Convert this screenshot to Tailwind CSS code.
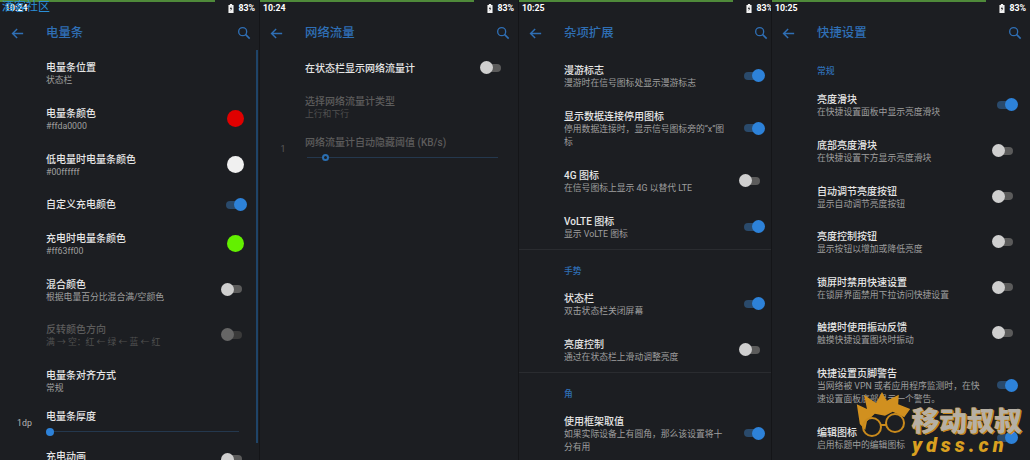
<!DOCTYPE html>
<html lang="zh">
<head>
<meta charset="UTF-8">
<title>Settings</title>
<script src="https://cdn.jsdelivr.net/npm/@tailwindcss/browser@4"></script>
</head>
<body class="w-[1030px] h-[460px] overflow-hidden bg-[#1c1e22] font-['Roboto','Noto_Sans_CJK_SC',sans-serif] text-[#e6e6e6]">

<svg class="hidden">
  <symbol id="back" viewBox="0 0 24 24"><path d="M20 12H5M11.5 5.5 5 12l6.5 6.5" fill="none" stroke="currentColor" stroke-width="2"/></symbol>
  <symbol id="search" viewBox="0 0 24 24"><circle cx="10" cy="10" r="6" fill="none" stroke="currentColor" stroke-width="2"/><path d="m14.5 14.5 6 6" fill="none" stroke="currentColor" stroke-width="2.4"/></symbol>
  <symbol id="batt" viewBox="0 0 8 12"><path d="M2.5 0h3v1.2H7.4V12H.6V1.2h1.9z" fill="#f2f2f2"/><path d="M4.5 3 2.5 6.8h1.4L3.4 9.6l2.2-4H4.2z" fill="#1c1e22"/></symbol>
</svg>

<div class="relative flex h-[460px]">

  <!-- 电量条 -->
  <section class="relative w-[259px] h-[460px] overflow-hidden shrink-0">
    <div class="h-[2px] w-[215px] bg-[#4f8a3a]"></div>
    <div class="flex items-center justify-between h-[13px] pl-[5px] pr-[4px] text-[8.8px] font-bold text-white"><span>10:24</span><span class="flex items-center gap-[4px]"><svg class="w-[6px] h-[9px]"><use href="#batt"/></svg>83%</span></div>
    <div class="flex items-center h-[36px] text-[#2f6fb5]">
      <svg class="w-[17px] h-[17px] ml-[9px]"><use href="#back"/></svg>
      <h1 class="ml-[20px] text-[12.4px] font-medium">电量条</h1>
      <svg class="w-[16px] h-[16px] ml-auto mr-[7px]"><use href="#search"/></svg>
    </div>
    <div class="pl-[46px] pr-[12px]">
      <div class="h-[46px] flex items-center justify-between"><div><p class="text-[10px] leading-[13px] font-medium">电量条位置</p><p class="text-[8.8px] leading-[13px] text-[#9f9f9f]">状态栏</p></div></div>
      <div class="h-[46px] flex items-center justify-between"><div><p class="text-[10px] leading-[13px] font-medium">电量条颜色</p><p class="text-[8.8px] leading-[13px] text-[#9f9f9f]">#ffda0000</p></div><span class="w-[17px] h-[17px] -mt-[3px] mr-[3px] rounded-full bg-[#e00000]"></span></div>
      <div class="h-[46px] flex items-center justify-between"><div><p class="text-[10px] leading-[13px] font-medium">低电量时电量条颜色</p><p class="text-[8.8px] leading-[13px] text-[#9f9f9f]">#00ffffff</p></div><span class="w-[17px] h-[17px] -mt-[3px] mr-[3px] rounded-full bg-[#f0f0f0]"></span></div>
      <div class="h-[31px] mb-[2px] flex items-center justify-between"><p class="text-[10px] leading-[13px] font-medium">自定义充电颜色</p>
        <div class="relative w-[26px] h-[13px] shrink-0"><span class="absolute left-[5px] top-[2.5px] w-[18px] h-[8px] rounded-full bg-[#2a4a6b]"></span><span class="absolute right-0 top-0 w-[13px] h-[13px] rounded-full bg-[#2d82d9]"></span></div></div>
      <div class="h-[46px] flex items-center justify-between"><div><p class="text-[10px] leading-[13px] font-medium">充电时电量条颜色</p><p class="text-[8.8px] leading-[13px] text-[#9f9f9f]">#ff63ff00</p></div><span class="w-[17px] h-[17px] -mt-[3px] mr-[3px] rounded-full bg-[#63f000]"></span></div>
      <div class="h-[45px] flex items-center justify-between"><div><p class="text-[10px] leading-[13px] font-medium">混合颜色</p><p class="text-[8.8px] leading-[13px] text-[#9f9f9f]">根据电量百分比混合满/空颜色</p></div>
        <div class="relative w-[26px] h-[13px] -mt-[3px] shrink-0"><span class="absolute left-[3px] top-[2.5px] w-[18px] h-[8px] rounded-full bg-[#5b5b5b]"></span><span class="absolute left-0 top-0 w-[13px] h-[13px] rounded-full bg-[#cfcfcf]"></span></div></div>
      <div class="h-[46px] flex items-center justify-between"><div><p class="text-[10px] leading-[13px] font-medium text-[#5c5c5c]">反转颜色方向</p><p class="text-[8.8px] leading-[13px] text-[#505050]">满 → 空：红 ← 绿 ← 蓝 ← 红</p></div>
        <div class="relative w-[26px] h-[13px] -mt-[3px] shrink-0"><span class="absolute left-[3px] top-[2.5px] w-[18px] h-[8px] rounded-full bg-[#3a3a3a]"></span><span class="absolute left-0 top-0 w-[13px] h-[13px] rounded-full bg-[#666666]"></span></div></div>
      <div class="h-[46px] flex items-center justify-between"><div><p class="text-[10px] leading-[13px] font-medium">电量条对齐方式</p><p class="text-[8.8px] leading-[13px] text-[#9f9f9f]">常规</p></div></div>
      <div class="h-[35px] -ml-[29px] flex">
        <span class="w-[14px] mr-[15px] pt-[12px] text-[8.8px] leading-[13px] text-center whitespace-nowrap text-[#b5b5b5]">1dp</span>
        <div class="flex-1 pr-[8px] pt-[4.5px]"><p class="text-[10px] leading-[13px] font-medium">电量条厚度</p>
          <div class="relative mt-[8.5px] h-[1px] bg-[#24384e]"><span class="absolute left-0 -top-[3.5px] w-[8px] h-[8px] rounded-full bg-[#2d82d9]"></span></div></div>
      </div>
      <div class="h-[46px] flex items-center justify-between"><div class="h-[26px]"><p class="text-[10px] leading-[13px] font-medium">充电动画</p></div>
        <div class="relative w-[26px] h-[13px] -mt-[8px] shrink-0"><span class="absolute left-[3px] top-[2.5px] w-[18px] h-[8px] rounded-full bg-[#5b5b5b]"></span><span class="absolute left-0 top-0 w-[13px] h-[13px] rounded-full bg-[#cfcfcf]"></span></div></div>
    </div>
    <div class="absolute right-[1px] top-[50px] w-[2px] h-[393px] bg-[#1f4468]"></div>
    <span class="absolute left-[2px] top-0 text-[12px] leading-[14px] text-[#2b8fd8]">酒客社区</span>
  </section>

  <!-- 网络流量 -->
  <section class="relative w-[259px] h-[460px] overflow-hidden shrink-0">
    <div class="absolute left-0 top-0 bottom-0 w-[1px] bg-[#141518]"></div>
    <div class="h-[2px] w-[215px] bg-[#4f8a3a]"></div>
    <div class="flex items-center justify-between h-[13px] pl-[4px] pr-[4px] text-[8.8px] font-bold text-white"><span>10:24</span><span class="flex items-center gap-[4px]"><svg class="w-[6px] h-[9px]"><use href="#batt"/></svg>83%</span></div>
    <div class="flex items-center h-[36px] text-[#2f6fb5]">
      <svg class="w-[17px] h-[17px] ml-[9px]"><use href="#back"/></svg>
      <h1 class="ml-[20px] text-[12.4px] font-medium">网络流量</h1>
      <svg class="w-[16px] h-[16px] ml-auto mr-[7px]"><use href="#search"/></svg>
    </div>
    <div class="pl-[46px] pr-[12px]">
      <div class="h-[34px] flex items-center justify-between"><p class="text-[10px] leading-[13px] font-medium">在状态栏显示网络流量计</p>
        <div class="relative w-[26px] h-[13px] -mt-[1px] shrink-0"><span class="absolute left-[3px] top-[2.5px] w-[18px] h-[8px] rounded-full bg-[#5b5b5b]"></span><span class="absolute left-0 top-0 w-[13px] h-[13px] rounded-full bg-[#cfcfcf]"></span></div></div>
      <div class="h-[46px] flex items-center"><div><p class="text-[10px] leading-[13px] font-medium text-[#5c5c5c]">选择网络流量计类型</p><p class="text-[8.8px] leading-[13px] text-[#505050]">上行和下行</p></div></div>
      <div class="h-[35px] -ml-[29px] flex">
        <span class="w-[14px] mr-[15px] pt-[12px] text-[8.8px] leading-[13px] text-center text-[#5c5c5c]">1</span>
        <div class="flex-1 pr-[8px] pt-[4.5px]"><p class="text-[10px] leading-[13px] font-medium text-[#5c5c5c]">网络流量计自动隐藏阈值 (KB/s)</p>
          <div class="relative mt-[8.5px] ml-[2px] h-[1px] bg-[#24384e]"><span class="absolute left-[15px] -top-[3px] w-[7px] h-[7px] rounded-full border-2 border-[#2a6eb0] bg-[#1c1e22]"></span></div></div>
      </div>
    </div>
  </section>

  <!-- 杂项扩展 -->
  <section class="relative w-[253px] h-[460px] overflow-hidden shrink-0">
    <div class="absolute left-0 top-0 bottom-0 w-[1px] bg-[#141518]"></div>
    <div class="h-[2px] w-[215px] bg-[#4f8a3a]"></div>
    <div class="flex items-center justify-between h-[13px] pl-[4px] text-[8.8px] font-bold text-white w-[259px] pr-[4px]"><span>10:25</span><span class="flex items-center gap-[4px]"><svg class="w-[6px] h-[9px]"><use href="#batt"/></svg>83%</span></div>
    <div class="flex items-center h-[36px] text-[#2f6fb5]">
      <svg class="w-[17px] h-[17px] ml-[9px]"><use href="#back"/></svg>
      <h1 class="ml-[20px] text-[12.4px] font-medium">杂项扩展</h1>
      <svg class="w-[16px] h-[16px] ml-auto mr-[2px]"><use href="#search"/></svg>
    </div>
    <div class="pt-[3px]">
      <div class="h-[46px] pl-[46px] pr-[6px] flex items-center justify-between"><div><p class="text-[10px] leading-[13px] font-medium">漫游标志</p><p class="text-[8.8px] leading-[13px] text-[#9f9f9f]">漫游时在信号图标处显示漫游标志</p></div>
        <div class="relative w-[26px] h-[13px] -mt-[3px] shrink-0"><span class="absolute left-[5px] top-[2.5px] w-[18px] h-[8px] rounded-full bg-[#2a4a6b]"></span><span class="absolute right-0 top-0 w-[13px] h-[13px] rounded-full bg-[#2d82d9]"></span></div></div>
      <div class="h-[59px] pl-[46px] pr-[6px] flex items-center justify-between"><div><p class="text-[10px] leading-[13px] font-medium">显示数据连接停用图标</p><p class="text-[8.8px] leading-[13px] text-[#9f9f9f]">停用数据连接时，显示信号图标旁的“x”图<br>标</p></div>
        <div class="relative w-[26px] h-[13px] -mt-[3px] shrink-0"><span class="absolute left-[5px] top-[2.5px] w-[18px] h-[8px] rounded-full bg-[#2a4a6b]"></span><span class="absolute right-0 top-0 w-[13px] h-[13px] rounded-full bg-[#2d82d9]"></span></div></div>
      <div class="h-[46px] pl-[46px] pr-[6px] flex items-center justify-between"><div><p class="text-[10px] leading-[13px] font-medium">4G 图标</p><p class="text-[8.8px] leading-[13px] text-[#9f9f9f]">在信号图标上显示 4G 以替代 LTE</p></div>
        <div class="relative w-[26px] h-[13px] -mt-[3px] shrink-0"><span class="absolute left-[3px] top-[2.5px] w-[18px] h-[8px] rounded-full bg-[#5b5b5b]"></span><span class="absolute left-0 top-0 w-[13px] h-[13px] rounded-full bg-[#cfcfcf]"></span></div></div>
      <div class="h-[46px] -mb-[2px] pl-[46px] pr-[6px] flex items-center justify-between"><div><p class="text-[10px] leading-[13px] font-medium">VoLTE 图标</p><p class="text-[8.8px] leading-[13px] text-[#9f9f9f]">显示 VoLTE 图标</p></div>
        <div class="relative w-[26px] h-[13px] -mt-[3px] shrink-0"><span class="absolute left-[5px] top-[2.5px] w-[18px] h-[8px] rounded-full bg-[#2a4a6b]"></span><span class="absolute right-0 top-0 w-[13px] h-[13px] rounded-full bg-[#2d82d9]"></span></div></div>
      <div class="h-[1px] bg-[#2a2c30]"></div>
      <p class="pl-[46px] pt-[15px] pb-[4px] text-[8.8px] leading-[13px] font-medium text-[#2f6fb5]">手势</p>
      <div class="h-[46px] pl-[46px] pr-[6px] flex items-center justify-between"><div><p class="text-[10px] leading-[13px] font-medium">状态栏</p><p class="text-[8.8px] leading-[13px] text-[#9f9f9f]">双击状态栏关闭屏幕</p></div>
        <div class="relative w-[26px] h-[13px] -mt-[3px] shrink-0"><span class="absolute left-[5px] top-[2.5px] w-[18px] h-[8px] rounded-full bg-[#2a4a6b]"></span><span class="absolute right-0 top-0 w-[13px] h-[13px] rounded-full bg-[#2d82d9]"></span></div></div>
      <div class="h-[46px] -mb-[2px] pl-[46px] pr-[6px] flex items-center justify-between"><div><p class="text-[10px] leading-[13px] font-medium">亮度控制</p><p class="text-[8.8px] leading-[13px] text-[#9f9f9f]">通过在状态栏上滑动调整亮度</p></div>
        <div class="relative w-[26px] h-[13px] -mt-[3px] shrink-0"><span class="absolute left-[3px] top-[2.5px] w-[18px] h-[8px] rounded-full bg-[#5b5b5b]"></span><span class="absolute left-0 top-0 w-[13px] h-[13px] rounded-full bg-[#cfcfcf]"></span></div></div>
      <div class="h-[1px] bg-[#2a2c30]"></div>
      <p class="pl-[46px] pt-[15px] pb-[4px] text-[8.8px] leading-[13px] font-medium text-[#2f6fb5]">角</p>
      <div class="h-[59px] pl-[46px] pr-[6px] flex items-center justify-between"><div><p class="text-[10px] leading-[13px] font-medium">使用框架取值</p><p class="text-[8.8px] leading-[13px] text-[#9f9f9f]">如果实际设备上有圆角，那么该设置将十<br>分有用</p></div>
        <div class="relative w-[26px] h-[13px] -mt-[3px] shrink-0"><span class="absolute left-[5px] top-[2.5px] w-[18px] h-[8px] rounded-full bg-[#2a4a6b]"></span><span class="absolute right-0 top-0 w-[13px] h-[13px] rounded-full bg-[#2d82d9]"></span></div></div>
    </div>
  </section>

  <!-- 快捷设置 -->
  <section class="relative w-[259px] h-[460px] overflow-hidden shrink-0">
    <div class="absolute left-0 top-0 bottom-0 w-[1px] bg-[#141518]"></div>
    <div class="h-[2px] w-[215px] bg-[#4f8a3a]"></div>
    <div class="flex items-center justify-between h-[13px] pl-[4px] pr-[4px] text-[8.8px] font-bold text-white"><span>10:25</span><span class="flex items-center gap-[4px]"><svg class="w-[6px] h-[9px]"><use href="#batt"/></svg>83%</span></div>
    <div class="flex items-center h-[36px] text-[#2f6fb5]">
      <svg class="w-[17px] h-[17px] ml-[9px]"><use href="#back"/></svg>
      <h1 class="ml-[20px] text-[12.4px] font-medium">快捷设置</h1>
      <svg class="w-[16px] h-[16px] ml-auto mr-[7px]"><use href="#search"/></svg>
    </div>
    <p class="pl-[46px] pt-[14px] pb-[5px] text-[8.8px] leading-[13px] font-medium text-[#2f6fb5]">常规</p>
    <div class="pl-[46px] pr-[12px]">
      <div class="h-[46px] flex items-center justify-between"><div><p class="text-[10px] leading-[13px] font-medium">亮度滑块</p><p class="text-[8.8px] leading-[13px] text-[#9f9f9f]">在快捷设置面板中显示亮度滑块</p></div>
        <div class="relative w-[26px] h-[13px] -mt-[3px] shrink-0"><span class="absolute left-[5px] top-[2.5px] w-[18px] h-[8px] rounded-full bg-[#2a4a6b]"></span><span class="absolute right-0 top-0 w-[13px] h-[13px] rounded-full bg-[#2d82d9]"></span></div></div>
      <div class="h-[46px] flex items-center justify-between"><div><p class="text-[10px] leading-[13px] font-medium">底部亮度滑块</p><p class="text-[8.8px] leading-[13px] text-[#9f9f9f]">在快捷设置下方显示亮度滑块</p></div>
        <div class="relative w-[26px] h-[13px] -mt-[3px] shrink-0"><span class="absolute left-[3px] top-[2.5px] w-[18px] h-[8px] rounded-full bg-[#5b5b5b]"></span><span class="absolute left-0 top-0 w-[13px] h-[13px] rounded-full bg-[#cfcfcf]"></span></div></div>
      <div class="h-[45px] flex items-center justify-between"><div><p class="text-[10px] leading-[13px] font-medium">自动调节亮度按钮</p><p class="text-[8.8px] leading-[13px] text-[#9f9f9f]">显示自动调节亮度按钮</p></div>
        <div class="relative w-[26px] h-[13px] -mt-[3px] shrink-0"><span class="absolute left-[3px] top-[2.5px] w-[18px] h-[8px] rounded-full bg-[#5b5b5b]"></span><span class="absolute left-0 top-0 w-[13px] h-[13px] rounded-full bg-[#cfcfcf]"></span></div></div>
      <div class="h-[46px] flex items-center justify-between"><div><p class="text-[10px] leading-[13px] font-medium">亮度控制按钮</p><p class="text-[8.8px] leading-[13px] text-[#9f9f9f]">显示按钮以增加或降低亮度</p></div>
        <div class="relative w-[26px] h-[13px] -mt-[3px] shrink-0"><span class="absolute left-[3px] top-[2.5px] w-[18px] h-[8px] rounded-full bg-[#5b5b5b]"></span><span class="absolute left-0 top-0 w-[13px] h-[13px] rounded-full bg-[#cfcfcf]"></span></div></div>
      <div class="h-[45px] flex items-center justify-between"><div><p class="text-[10px] leading-[13px] font-medium">锁屏时禁用快速设置</p><p class="text-[8.8px] leading-[13px] text-[#9f9f9f]">在锁屏界面禁用下拉访问快捷设置</p></div>
        <div class="relative w-[26px] h-[13px] -mt-[3px] shrink-0"><span class="absolute left-[3px] top-[2.5px] w-[18px] h-[8px] rounded-full bg-[#5b5b5b]"></span><span class="absolute left-0 top-0 w-[13px] h-[13px] rounded-full bg-[#cfcfcf]"></span></div></div>
      <div class="h-[46px] flex items-center justify-between"><div><p class="text-[10px] leading-[13px] font-medium">触摸时使用振动反馈</p><p class="text-[8.8px] leading-[13px] text-[#9f9f9f]">触摸快捷设置图块时振动</p></div>
        <div class="relative w-[26px] h-[13px] -mt-[3px] shrink-0"><span class="absolute left-[3px] top-[2.5px] w-[18px] h-[8px] rounded-full bg-[#5b5b5b]"></span><span class="absolute left-0 top-0 w-[13px] h-[13px] rounded-full bg-[#cfcfcf]"></span></div></div>
      <div class="h-[59px] flex items-center justify-between"><div><p class="text-[10px] leading-[13px] font-medium">快捷设置页脚警告</p><p class="text-[8.8px] leading-[13px] text-[#9f9f9f]">当网络被 VPN 或者应用程序监测时，在快<br>速设置面板底部显示一个警告。</p></div>
        <div class="relative w-[26px] h-[13px] -mt-[3px] shrink-0"><span class="absolute left-[5px] top-[2.5px] w-[18px] h-[8px] rounded-full bg-[#2a4a6b]"></span><span class="absolute right-0 top-0 w-[13px] h-[13px] rounded-full bg-[#2d82d9]"></span></div></div>
      <div class="h-[46px] flex items-center justify-between"><div><p class="text-[10px] leading-[13px] font-medium">编辑图标</p><p class="text-[8.8px] leading-[13px] text-[#9f9f9f]">启用标题中的编辑图标</p></div>
        <div class="relative w-[26px] h-[13px] -mt-[3px] shrink-0"><span class="absolute left-[5px] top-[2.5px] w-[18px] h-[8px] rounded-full bg-[#2a4a6b]"></span><span class="absolute right-0 top-0 w-[13px] h-[13px] rounded-full bg-[#2d82d9]"></span></div></div>
    </div>
  </section>

  <!-- watermark -->
  <div class="absolute left-[855px] top-[392px] z-10 w-[60px] h-[68px]">
    <div class="absolute inset-0 bg-[#d1901f] [clip-path:polygon(3%_18%,20%_25%,15%_4%,35%_16%,45%_0%,53%_13%,73%_4%,72%_18%,92%_25%,82%_37%,63%_29%,50%_35%,33%_32%,20%_43%,17%_56%,8%_47%)]"></div>
    <div class="absolute left-[7px] top-[25px] w-[20px] h-[20px] rounded-full border-2 border-[#c98a1c]"></div>
    <div class="absolute left-[30px] top-[21px] w-[20px] h-[20px] rounded-full border-2 border-[#c98a1c]"></div>
    <div class="absolute left-[26px] top-[32px] w-[5px] h-[2px] bg-[#c98a1c]"></div>
  </div>
  <div class="absolute left-[912px] top-[404px] z-10 text-[27.5px] leading-[35px] font-black whitespace-nowrap text-[#b5b0a6] [text-shadow:1px_1px_0_#c8871a,-1px_0_0_#c8871a]">移动叔叔</div>
  <div class="absolute left-[912px] top-[435px] z-10 text-[20px] leading-[20px] font-black italic tracking-[4px] whitespace-nowrap text-[#d9a020]">ydss.cn</div>
</div>
</body>
</html>
